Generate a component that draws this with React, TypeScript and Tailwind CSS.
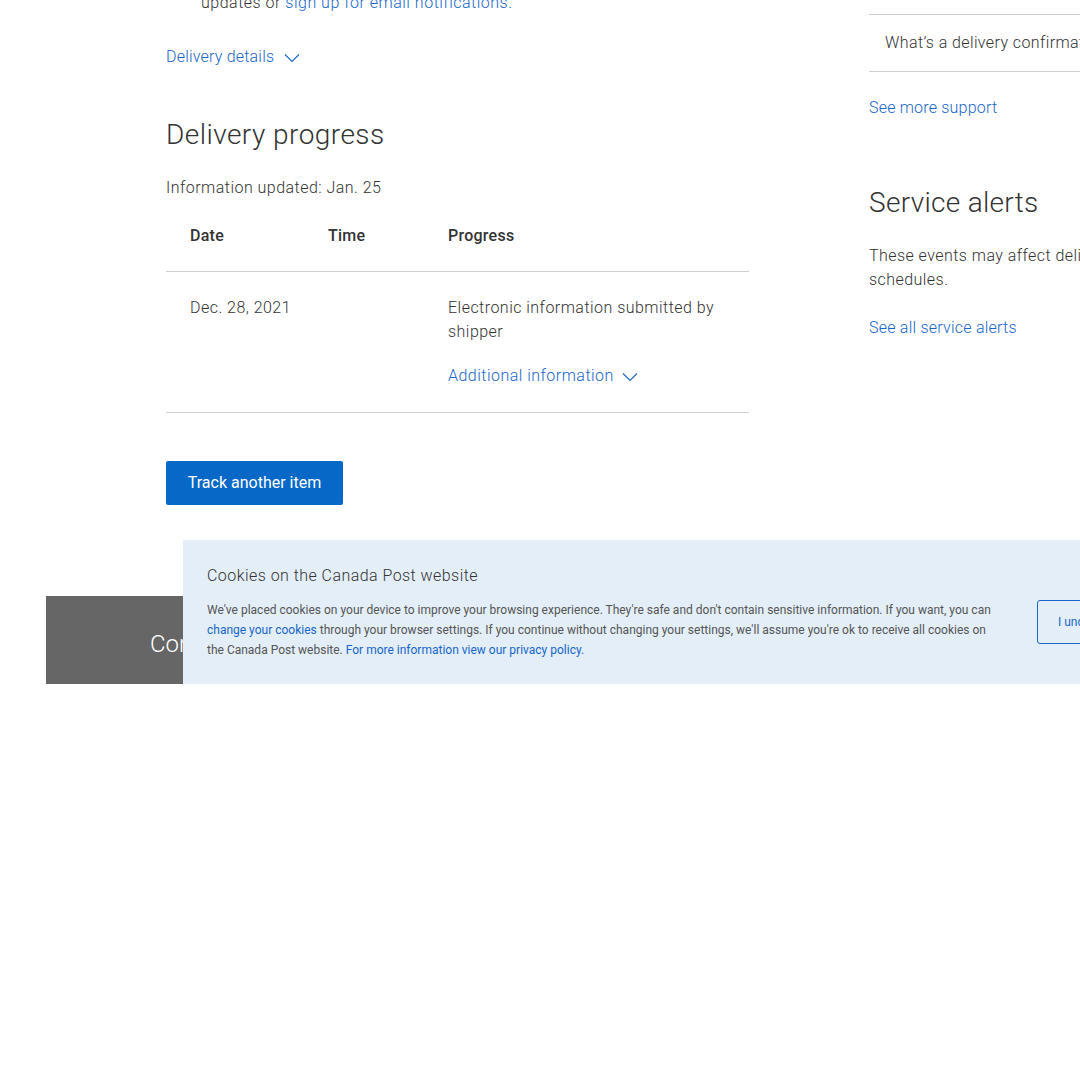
import React from "react";

function Chevron({ className }: { className?: string }) {
  return (
    <svg className={className} width="16" height="10" viewBox="0 0 16 10" fill="none">
      <polyline points="1,1.5 8,8.5 15,1.5" stroke="currentColor" strokeWidth="1.1" />
    </svg>
  );
}

export default function App() {
  return (
    <div
      className="relative w-[1080px] h-[1080px] overflow-hidden bg-white text-[#333]"
      style={{ fontFamily: "Roboto, 'Liberation Sans', sans-serif" }}
    >
      <div className="flex items-start">
        {/* Left column */}
        <div className="ml-[166px] w-[583px] shrink-0 -mt-[9px] flex flex-col font-light">
          <p className="pl-[35px] text-[16px] leading-[24px] tracking-[0.5px]">
            updates or <span className="text-[#1866c9]">sign up for email notifications.</span>
          </p>
          <div className="mt-[30px] flex items-center gap-[10px] text-[16px] leading-[24px] tracking-[0.2px] text-[#1866c9]">
            <span>Delivery details</span>
            <Chevron className="mt-[1px]" />
          </div>
          <h2 className="mt-[48px] text-[28px] leading-[36px] font-light tracking-[0.45px] text-[#333]">Delivery progress</h2>
          <p className="mt-[23px] text-[16px] leading-[24px] tracking-[0.47px]">Information updated: Jan. 25</p>
          <div className="flex border-b border-[#cfcfcf] pt-6 pb-[23px] text-[16px] leading-[24px] font-medium tracking-[0.25px] text-[#333]">
            <div className="w-[138px] pl-6">Date</div>
            <div className="w-[120px] pl-6">Time</div>
            <div className="flex-1 pl-6">Progress</div>
          </div>
          <div className="flex border-b border-[#cfcfcf] pt-6 pb-[24px] text-[16px] leading-[24px] tracking-[0.47px]">
            <div className="w-[138px] pl-6">Dec. 28, 2021</div>
            <div className="w-[120px] pl-6"></div>
            <div className="flex-1 pl-6 pr-4">
              <p className="whitespace-nowrap">
                Electronic information submitted by
                <br />
                shipper
              </p>
              <div className="mt-[20px] flex items-center gap-[8px] tracking-[0.48px] text-[#1866c9]">
                <span>Additional information</span>
                <Chevron className="mt-[1px]" />
              </div>
            </div>
          </div>
          <div className="mt-[48px]">
            <button className="h-[44px] w-[177px] rounded-[2px] bg-[#0868c8] text-[16px] font-normal text-white">
              Track another item
            </button>
          </div>
        </div>

        {/* Right column */}
        <div className="ml-[120px] w-[300px] shrink-0 mt-[14px] flex flex-col font-light text-[16px] leading-[24px]">
          <div className="border-t border-b border-[#cfcfcf] py-4 pl-4 whitespace-nowrap tracking-[0.4px]">
            What’s a delivery confirmation card?
          </div>
          <p className="mt-[24px] tracking-[0.2px] text-[#1866c9]">See more support</p>
          <h2 className="mt-[65px] text-[28px] leading-[36px] font-light tracking-[0.3px]">Service alerts</h2>
          <p className="mt-[23px] w-[270px] tracking-[0.45px]">These events may affect delivery schedules.</p>
          <p className="mt-[24px] tracking-[0.23px] text-[#1866c9]">See all service alerts</p>
        </div>
      </div>

      {/* Feedback tab */}
      <div className="absolute left-[46px] top-[596px] h-[88px] w-[300px] bg-[#666666] flex items-center pt-[8px] pl-[104px] text-[24px] font-light text-white">
        Comments
      </div>

      {/* Cookie banner */}
      <div className="absolute left-[183px] top-[540px] h-[144px] w-[1100px] bg-[#e3eef9] flex items-start">
        <div className="pl-6 pt-[24px] w-[812px] font-light">
          <h3 className="text-[16px] leading-[24px] tracking-[0.45px] text-[#333]">Cookies on the Canada Post website</h3>
          <p className="mt-[12px] text-[12px] leading-[20px] font-normal text-[#555]">
            We've placed cookies on your device to improve your browsing experience. They're safe and don't contain sensitive information. If you want, you can{" "}
            <span className="text-[#1866c9]">change your cookies</span> through your browser settings. If you continue without changing your settings, we'll assume you're ok to receive all cookies on the Canada Post website.{" "}
            <span className="text-[#1866c9]">For more information view our privacy policy.</span>
          </p>
        </div>
        <div className="ml-[42px] mt-[60px] h-[44px] w-[160px] rounded-[3px] border border-[#1866c9] flex items-center pl-[20px] text-[12px] text-[#1866c9]">
          I understand
        </div>
      </div>
    </div>
  );
}
